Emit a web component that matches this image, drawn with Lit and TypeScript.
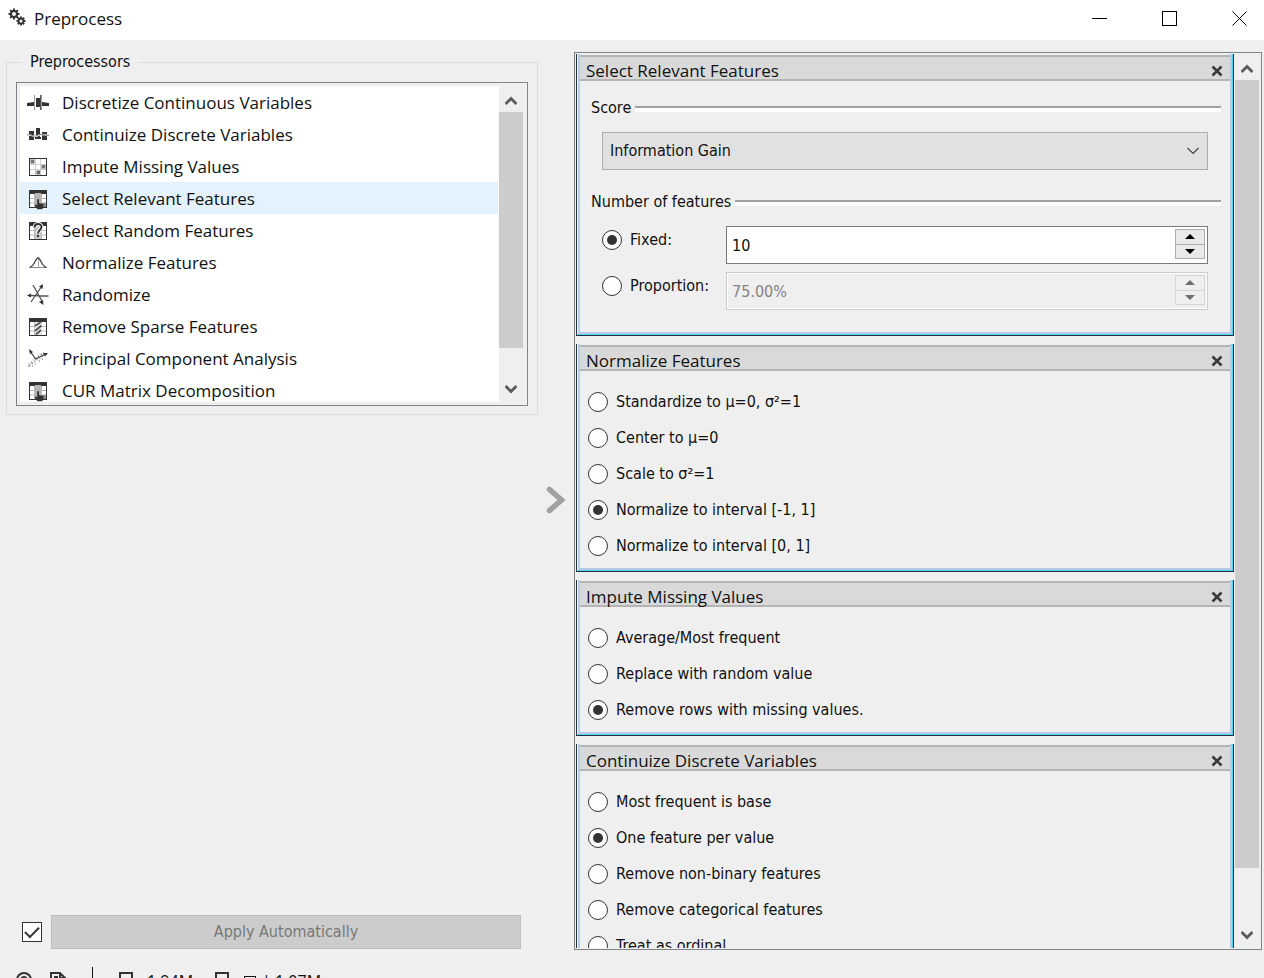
import { LitElement, html, svg, css, TemplateResult } from "lit";
import { customElement, property, state } from "lit/decorators.js";

const INK = "#333333";

const tableBase = svg`
  <rect x="2.5" y="2.5" width="17" height="17" fill="#fff" stroke=${INK}/>
  <path d="M3 10.5H19M3 15H19M7.5 6V19M14.5 6V19" stroke="#bdbdbd" fill="none"/>
  <rect x="2" y="2" width="18" height="4" fill=${INK}/>`;

const handTable = svg`${tableBase}
  <rect x="8" y="5" width="6" height="14" fill="#b4b4b4"/>
  <rect x="15" y="15" width="4" height="4" fill="#8a8a8a"/>
  <path d="M10.200 11.500q1-1 1.800 0v3.500l4.400 1v3.500l-1.400 1.700h-4.600l-3-4.200q1-1 2.800 .3z" fill=${INK}/>`;

const ICONS: Record<string, TemplateResult> = {
  discretize: svg`
    <path d="M0 11L7 10V14H0zM15 10L22 11V14H15z" fill=${INK}/>
    <path d="M7.500 3V18M14.500 3V18" stroke="#9a9a9a"/>
    <rect x="9" y="6" width="4" height="9" fill=${INK}/>
    <path d="M13.500 3v15" stroke="#555"/>`,
  continuize: svg`
    <path d="M2 7h5v9H2zM9 4h4v11H9zM15 8h5v8h-5z" fill=${INK}/>
    <path d="M0 11.500C4 9 6 14 10 12S16 10 22 12" stroke="#fff" stroke-width="1.500" fill="none"/>
    <path d="M0 11C4 9 6 14 10 11.500S16 11 22 11.500" stroke="#777" fill="none"/>
    <path d="M8 14h6" stroke=${INK} stroke-width="2"/>`,
  impute: svg`
    <rect x="2.500" y="2.500" width="17" height="17" fill="#fff" stroke=${INK}/>
    <path d="M8.500 3V19M13.500 3V19M3 8.500H19M3 13.500H19" stroke="#d0d0d0"/>
    <rect x="3" y="3" width="5" height="5" fill="#c4c4c4"/><rect x="4" y="4" width="3" height="3" fill="#777"/>
    <rect x="14" y="8" width="5" height="6" fill="#c4c4c4"/><rect x="15" y="9" width="3" height="3" fill="#777"/>
    <rect x="8" y="14" width="6" height="5" fill="#c4c4c4"/><rect x="10" y="15" width="3" height="3" fill="#666"/>`,
  relevant: handTable,
  random: svg`${tableBase}
    <rect x="8" y="5" width="6" height="14" fill="#c4c4c4"/>
    <path d="M7.500 7.500C7.500 3 14.500 3 14.500 7C14.500 10 11 10 11 13.500" stroke="#fff" stroke-width="4" fill="none"/>
    <path d="M7.500 7.500C7.500 3 14.500 3 14.500 7C14.500 10 11 10 11 13.500" stroke=${INK} stroke-width="2" fill="none"/>
    <rect x="10" y="15" width="2" height="2" fill=${INK}/>`,
  normalize: svg`
    <path d="M2 15.500H20" stroke="#8c8c8c"/>
    <path d="M11.500 6V15" stroke="#aaa"/>
    <path d="M3 15C8 14 8 6 11 6S14 14 19 15" stroke="#444" stroke-width="1.300" fill="none"/>`,
  randomize: svg`
    <path d="M2 11.500L21.500 12M4 18L15 2M6 1L15.500 18" stroke="#555" stroke-width="1.300"/>
    <path d="M0 11.500L4 9.500V13.500zM16 0L15.500 5L12 2.500zM16.500 21L12 18L16 16z" fill=${INK}/>`,
  sparse: svg`${tableBase}
    <rect x="8" y="6" width="7" height="13" fill="#e8e8e8"/>
    <path d="M8 10L14 6M8 15L14.500 9.500M9 18.500L14 14" stroke="#555" stroke-width="1.800"/>`,
  pca: svg`
    <path d="M2 17L10 11L18 5" stroke="#c4c4c4" stroke-width="4" stroke-dasharray="1.500 1.500"/>
    <path d="M1 18h2M4 15h2M5 18h1M8 16h1M12 13h1M15 11h1M11 8h1M14 6h1" stroke="#777"/>
    <path d="M3 3L8.500 11L19 6" stroke="#444" stroke-width="1.300" fill="none"/>
    <path d="M2 1L6 4L3 6zM21 5L18 8.500L16 5z" fill=${INK}/>`,
  cur: handTable,
};

function gear(cx: number, cy: number, r: number) {
  const teeth = [0, 45, 90, 135].map(
    (a) => svg`<path d=${`M${cx} ${cy - r - 1.5}V${cy + r + 1.5}`} stroke=${INK} stroke-width="2"
      transform=${`rotate(${a} ${cx} ${cy})`}/>`
  );
  return svg`${teeth}<circle cx=${cx} cy=${cy} r=${r} fill=${INK}/><circle cx=${cx} cy=${cy} r=${r * 0.5} fill="#fff"/>`;
}

@customElement("scroll-bar")
export class ScrollBar extends LitElement {
  static styles = css`
    :host { display: flex; flex-direction: column; width: 24px; flex: none; background: #efefef; }
    button { height: 26px; flex: none; padding: 3px 0 0; border: 0; background: none; display: grid; place-items: center; }
    button.down { padding: 0; }
    .track { flex: 1; }
    .thumb { background: #cccccc; }
    svg { fill: none; stroke: #5c5c5c; stroke-width: 3; }
  `;
  @property({ type: Number }) fill = 80;
  render() {
    return html`
      <button aria-label="Scroll up"><svg width="12" height="10" viewBox="0 0 12 10"><path d="M.5 8L6 2.500L11.500 8"/></svg></button>
      <div class="track"><div class="thumb" style="height:${this.fill}%"></div></div>
      <button class="down" aria-label="Scroll down"><svg width="12" height="10" viewBox="0 0 12 10"><path d="M.5 2L6 7.500L11.500 2"/></svg></button>`;
  }
}

@customElement("editor-card")
export class EditorCard extends LitElement {
  static styles = css`
    :host { display: block; flex: none; border: 1px solid #23303a; border-top: 0; }
    .glow { border: 1px solid #4fd2f5; border-top: 0; border-left-color: #f4f4f4; }
    .pane { border: 2px solid #b5cce6; border-top: 0; padding-top: 1px; }
    header {
      display: flex; align-items: center; justify-content: space-between;
      height: 22px; padding: 0 7px 0 6px;
      border: 2px solid #b4b4b4; border-left: 0; border-right: 0; background: #d9d9d9;
    }
    h2 { margin: 0; font: 17px/24px "Open Sans", "Noto Sans", sans-serif; color: #111; padding-top: 6px; }
    button { border: 0; padding: 6px 0 0; background: none; display: flex; }
  `;
  @property() heading = "";
  render() {
    return html`<div class="glow"><div class="pane">
      <header>
        <h2>${this.heading}</h2>
        <button aria-label="Remove ${this.heading}">
          <svg width="12" height="12" viewBox="0 0 12 12"><path d="M1.500 1.500L10.500 10.500M10.500 1.500L1.500 10.500" stroke="#3a3a3a" stroke-width="2.600"/></svg>
        </button>
      </header>
      <slot></slot>
    </div></div>`;
  }
}

@customElement("app-root")
export class AppRoot extends LitElement {
  static styles = css`
    :host {
      display: block; height: 100vh; overflow: hidden; background: #efefef; color: #111;
      --segoe: "Open Sans", "Noto Sans", sans-serif;
      --tahoma: "DejaVu Sans Condensed", "Noto Sans", sans-serif;
      font: 16px/20px var(--tahoma);
    }
    * { box-sizing: border-box; }
    input, button, select { font: inherit; color: inherit; margin: 0; }
    .window { display: flex; flex-direction: column; height: calc(100% + 22px); }

    .titlebar { flex: none; height: 40px; background: #fff; display: flex; align-items: center; padding: 0 17px 4px 8px; }
    .titlebar h1 { flex: 1; margin: 0; padding: 2px 0 0 8px; font: 17px/24px var(--segoe); }
    .controls { display: flex; gap: 55px; }
    .controls button { border: 0; padding: 0; background: none; display: flex; }
    .controls svg { fill: none; stroke: #000; }

    .main {
      flex: 1; min-height: 0; display: grid; grid-template-columns: 532fr 36px 688fr;
      padding: 12px 2px 0 6px;
    }
    .left { display: flex; flex-direction: column; justify-content: space-between; min-width: 0; }
    fieldset { margin: 0; padding: 10px 9px 8px; border: 1px solid #dcdcdc; min-width: 0; }
    legend { margin-left: 6px; padding: 0 8px; }
    .listbox { display: flex; height: 324px; border: 1px solid #7f848c; padding: 3px 4px 3px 3px; }
    .list { flex: 1; margin: 0; padding: 0 1px 0 0; list-style: none; overflow: hidden; background: #fff; }
    .item {
      width: 100%; height: 32px; display: flex; align-items: center; gap: 13px;
      border: 0; padding: 2px 0 0 7px; background: none; font: 17px/24px var(--segoe); text-align: left;
    }
    .item.selected { background: #e4f2fd; }
    .item svg { flex: none; }

    .apply { display: flex; align-items: center; gap: 9px; padding: 0 17px 1px 16px; }
    .apply button { flex: 1; height: 34px; border: 1px solid #bfbfbf; background: #cccccc; color: #787878; }
    .check { appearance: none; width: 20px; height: 20px; border: 1px solid #333; background: #fff; display: grid; place-items: center; }
    .check:checked::before {
      content: ""; width: 12px; height: 6px; border: solid #333; border-width: 0 0 2px 2px;
      transform: rotate(-45deg) translate(1px, -1px);
    }
    .flow { display: grid; place-items: center; padding-bottom: 2px; }

    .panel { display: flex; gap: 1px; border: 1px solid #7f848c; padding: 1px 2px 1px 1px; min-height: 0; min-width: 0; }
    .cards { flex: 1; display: flex; flex-direction: column; gap: 8px; overflow: hidden; min-width: 0; }

    .radios { padding: 13px 8px 4px; }
    .radios label { height: 36px; }
    label.opt { display: flex; align-items: center; gap: 8px; }
    .radio {
      appearance: none; width: 20px; height: 20px; flex: none; border: 1px solid #333; border-radius: 50%;
      background: #fff; display: grid; place-items: center;
    }
    .radio:checked::before { content: ""; width: 10px; height: 10px; border-radius: 50%; background: #333; }

    .form { padding: 17px 9px 22px 11px; }
    .group { display: flex; align-items: center; gap: 4px; }
    .group::after { content: ""; flex: 1; height: 4px; margin-top: 2px; border-top: 2px solid #a0a0a0; background: #fff; }
    .group.next { margin-top: 22px; }
    .fields { padding: 14px 13px 0 11px; }
    .select { position: relative; display: flex; align-items: center; }
    .select select {
      appearance: none; width: 100%; height: 38px; padding: 0 7px; border: 1px solid #adadad; border-radius: 0; background: #e1e1e1;
    }
    .select svg { position: absolute; right: 9px; pointer-events: none; }
    .rows { display: grid; grid-template-columns: 124px 1fr; row-gap: 8px; }
    .rows .opt { height: 28px; }
    .spin { display: flex; height: 38px; border: 1px solid #7a7a7a; background: #fff; padding: 2px; }
    .spin input { flex: 1; min-width: 0; border: 0; padding: 2px 3px 0; background: none; }
    .steps { width: 30px; height: 30px; display: flex; flex-direction: column; border: 1px solid #adadad; background: #e9e9e9; }
    .steps button { flex: 1; border: 0; padding: 0; background: none; display: grid; place-items: center; }
    .steps button + button { border-top: 1px solid #adadad; }
    .spin.off { border-color: #cccccc; background: #efefef; color: #838383; outline: 1px solid #fff; outline-offset: -2px; }
    .spin.off .steps, .spin.off .steps button { border-color: #d6d6d6; background: #efefef; }

    .status { flex: none; height: 50px; display: flex; align-items: center; padding: 12px 0 0 15px; font: 16px/20px var(--segoe); }
    .status svg { fill: none; stroke: #333; stroke-width: 2; flex: none; }
    .help { margin-right: 16px; }
    .bar { width: 1px; height: 28px; background: #111; margin: 0 25px 0 25px; }
    .size { display: flex; align-items: center; gap: 13px; margin-right: 21px; }
    .size.out { margin-right: 0; }
    .size.out .grid { stroke-width: 1; stroke: #111; margin-right: -8px; }
  `;

  @state() private selected = "relevant";

  private items: [string, string][] = [
    ["discretize", "Discretize Continuous Variables"],
    ["continuize", "Continuize Discrete Variables"],
    ["impute", "Impute Missing Values"],
    ["relevant", "Select Relevant Features"],
    ["random", "Select Random Features"],
    ["normalize", "Normalize Features"],
    ["randomize", "Randomize"],
    ["sparse", "Remove Sparse Features"],
    ["pca", "Principal Component Analysis"],
    ["cur", "CUR Matrix Decomposition"],
  ];

  private radios(name: string, options: string[], chosen: number) {
    return html`<div class="radios" role="radiogroup">
      ${options.map(
        (o, i) => html`<label class="opt"><input class="radio" type="radio" name=${name} ?checked=${i === chosen}>${o}</label>`
      )}
    </div>`;
  }

  private spin(label: string, value: string, off: boolean) {
    const c = off ? "#6e6e6e" : "#000";
    return html`<div class="spin ${off ? "off" : ""}">
      <input type="text" aria-label=${label} .value=${value} ?disabled=${off}>
      <div class="steps">
        <button aria-label="Increase" ?disabled=${off}><svg width="10" height="5"><path d="M0 5L5 0L10 5z" fill=${c}/></svg></button>
        <button aria-label="Decrease" ?disabled=${off}><svg width="10" height="5"><path d="M0 0L5 5L10 0z" fill=${c}/></svg></button>
      </div>
    </div>`;
  }

  render() {
    return html`<div class="window">
      <div class="titlebar">
        <svg width="18" height="20" viewBox="0 0 18 20">${gear(6, 6, 4)}${gear(13, 13, 3)}</svg>
        <h1>Preprocess</h1>
        <div class="controls">
          <button aria-label="Minimize"><svg width="15" height="15"><path d="M0 7.500H15"/></svg></button>
          <button aria-label="Maximize"><svg width="15" height="15"><rect x=".5" y=".5" width="14" height="14"/></svg></button>
          <button aria-label="Close"><svg width="15" height="15"><path d="M.5 .5L14.500 14.500M14.500 .5L.5 14.500"/></svg></button>
        </div>
      </div>

      <div class="main">
        <div class="left">
          <fieldset>
            <legend>Preprocessors</legend>
            <div class="listbox">
              <ul class="list">
                ${this.items.map(
                  ([id, name]) => html`<li><button class="item ${id === this.selected ? "selected" : ""}"
                    @click=${() => (this.selected = id)}>
                    <svg width="22" height="22" viewBox="0 0 22 22">${ICONS[id]}</svg>${name}</button></li>`
                )}
              </ul>
              <scroll-bar .fill=${89.4}></scroll-bar>
            </div>
          </fieldset>
          <div class="apply">
            <input class="check" type="checkbox" aria-label="Apply automatically" checked>
            <button disabled>Apply Automatically</button>
          </div>
        </div>

        <div class="flow">
          <svg width="20" height="28" viewBox="0 0 20 28"><path d="M3.500 3.500L15.500 14L3.500 24.500" fill="none" stroke="#a0a0a0" stroke-width="5.500" stroke-linecap="round"/></svg>
        </div>

        <div class="panel">
          <div class="cards">
            <editor-card heading="Select Relevant Features">
              <div class="form">
                <div class="group"><label for="score">Score</label></div>
                <div class="fields">
                  <div class="select">
                    <select id="score"><option>Information Gain</option></select>
                    <svg width="12" height="8" viewBox="0 0 12 8"><path d="M.5 1L6 6.500L11.500 1" fill="none" stroke="#444" stroke-width="1.200"/></svg>
                  </div>
                </div>
                <div class="group next">Number of features</div>
                <div class="fields rows">
                  <label class="opt"><input class="radio" type="radio" name="count" checked>Fixed:</label>
                  ${this.spin("Fixed", "10", false)}
                  <label class="opt"><input class="radio" type="radio" name="count">Proportion:</label>
                  ${this.spin("Proportion", "75.00%", true)}
                </div>
              </div>
            </editor-card>
            <editor-card heading="Normalize Features">
              ${this.radios("normalize", ["Standardize to μ=0, σ²=1", "Center to μ=0", "Scale to σ²=1", "Normalize to interval [-1, 1]", "Normalize to interval [0, 1]"], 3)}
            </editor-card>
            <editor-card heading="Impute Missing Values">
              ${this.radios("impute", ["Average/Most frequent", "Replace with random value", "Remove rows with missing values."], 2)}
            </editor-card>
            <editor-card heading="Continuize Discrete Variables">
              ${this.radios("continuize", ["Most frequent is base", "One feature per value", "Remove non-binary features", "Remove categorical features", "Treat as ordinal"], 1)}
            </editor-card>
          </div>
          <scroll-bar .fill=${93.6}></scroll-bar>
        </div>
      </div>

      <div class="status">
        <svg class="help" width="18" height="20" viewBox="0 0 18 20"><circle cx="9" cy="9" r="7"/><path d="M6.500 8.500a2.500 2.500 0 1 1 2.500 2.500v2"/></svg>
        <svg width="18" height="20" viewBox="0 0 18 20"><path d="M2 2H11L16 7V18.500H2zM5 6H9M5 10H12M11 2V7H16"/></svg>
        <div class="bar"></div>
        <span class="size"><svg width="16" height="20" viewBox="0 0 16 20"><path d="M2 7V2H14V14H9"/></svg>1.94M</span>
        <span class="size out">
          <svg width="16" height="20" viewBox="0 0 16 20"><path d="M7 14H2V2H14V7"/></svg>
          <svg class="grid" width="14" height="20" viewBox="0 0 14 20"><rect x="1.500" y="5.500" width="11" height="11"/></svg>
          <span>| 1.07M</span>
        </span>
      </div>
    </div>`;
  }
}
